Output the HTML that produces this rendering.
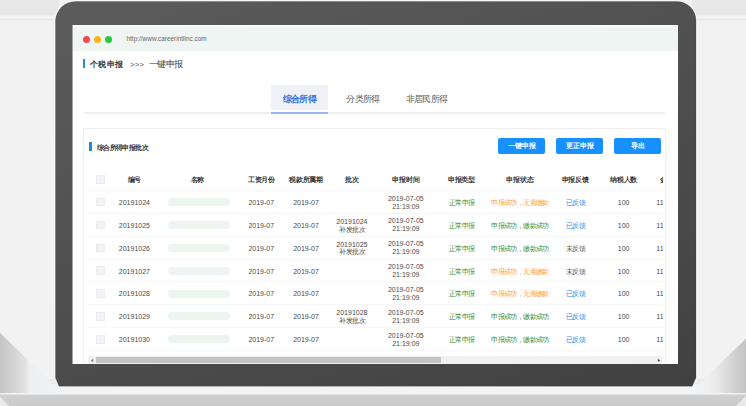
<!DOCTYPE html>
<html><head><meta charset="utf-8">
<style>
*{margin:0;padding:0;box-sizing:border-box}
html,body{width:746px;height:406px;overflow:hidden;background:#f2f2f2;font-family:"Liberation Sans",sans-serif;position:relative}
.abs{position:absolute}
#topband{position:absolute;left:0;top:0;width:746px;height:21px;background:linear-gradient(#e8e8e8 0,#e8e8e8 12px,#e3e4e4 13.5px,#ebebeb 15px,#f6f6f7 17.5px,#e6e7e7 19.5px,#f3f3f3 21px)}
#bezel{position:absolute;left:55.5px;top:1.5px;width:640.5px;height:385px;border-radius:21px 21px 6px 6px;background:linear-gradient(159deg,#5c5c5c,#414141);box-shadow:0 0 0 1px rgba(255,255,255,.75),inset 0 0 0 1px rgba(0,0,0,.12)}
#screen{position:absolute;left:73px;top:25px;width:605px;height:338.5px;background:#fff;overflow:hidden}
#bar{position:absolute;left:0;top:0;width:605px;height:25.6px;background:linear-gradient(#f8f9f9 0,#f8f9f9 2px,#eff5f3 2.6px)}
.dot{position:absolute;width:7px;height:7px;border-radius:50%;top:10.6px;box-shadow:0 0 0 0.6px rgba(255,255,255,.6)}
#url{position:absolute;left:53.5px;top:9.6px;font-size:6.45px;color:#666}
.c{position:absolute;text-align:center;white-space:nowrap;transform:translateY(-50%);line-height:1}
.h{font-size:7px;font-weight:bold;color:#383838;letter-spacing:-0.2px;text-indent:0.2px}
.d{font-size:7px;color:#4a4a4a}
.s{letter-spacing:-0.6px;font-weight:500;text-indent:0.6px}

.green{color:#2f8a2f}
.orange{color:#fd9a26}
.blue{color:#2a8af5}
.gray{color:#555}
.cb{position:absolute;width:8.6px;height:8.6px;background:#f2f2f9;border:1px solid #ececee}
.pill{position:absolute;width:62px;height:8px;border-radius:4px;background:#eef5f1}
.ln{position:absolute;left:88px;width:577px;height:1px;background:#f6f6fb}
#page{position:absolute;left:-73px;top:-25px;width:746px;height:406px}
.t8{font-size:8px;line-height:11px;transform-origin:0 50%}
.tab{font-size:9px;line-height:11px;letter-spacing:-0.65px;font-weight:500;color:#555}
.btn{top:138.3px;width:47px;height:15.4px;background:#1890ff;border-radius:2px;color:#fff;font-size:7px;font-weight:bold;text-align:center;line-height:15.3px}
</style></head><body>
<div id="topband"></div><div class="abs" style="left:58.6px;top:0;width:633px;height:21px;background:#f2f2f3"></div>
<svg class="abs" style="left:0;top:0" width="746" height="406" viewBox="0 0 746 406">
 <defs>
  <linearGradient id="gl" gradientUnits="userSpaceOnUse" x1="0" y1="0" x2="57" y2="0">
   <stop offset="0" stop-color="#c4c4c4"/><stop offset="0.1" stop-color="#cbcbcb"/><stop offset="0.3" stop-color="#d8d8d8"/><stop offset="0.45" stop-color="#e2e2e2"/><stop offset="0.52" stop-color="#eeeff1"/><stop offset="1" stop-color="#f0f1f3"/>
  </linearGradient>
  <linearGradient id="gr" gradientUnits="userSpaceOnUse" x1="746" y1="0" x2="695" y2="0">
   <stop offset="0" stop-color="#c4c4c4"/><stop offset="0.1" stop-color="#c9c9c9"/><stop offset="0.3" stop-color="#d6d6d6"/><stop offset="0.55" stop-color="#e7e7e8"/><stop offset="0.75" stop-color="#eff0f2"/><stop offset="1" stop-color="#f0f1f3"/>
  </linearGradient>
  <linearGradient id="gb" x1="0" y1="0" x2="0" y2="1">
   <stop offset="0" stop-color="#d0d0d0"/><stop offset="1" stop-color="#cacaca"/>
  </linearGradient>
 </defs>
 <rect x="0" y="380" width="746" height="14" fill="#f2f3f4"/>
 <polygon points="0,332.7 48.8,380 57,380 57,394 0,394" fill="url(#gl)"/>
 <polygon points="746,338.4 703.5,379.6 695,379.6 695,394 746,394" fill="url(#gr)"/>
 <rect x="0" y="393.5" width="746" height="12.5" fill="#e9e9e9"/>
 <path d="M0,394.3 H746 V396 L736,406 H9 L0,396.5 Z" fill="url(#gb)"/>
 <rect x="0" y="393.2" width="746" height="1.2" fill="#f5f5f5"/>
</svg>
<svg class="abs" style="left:0;top:0" width="746" height="406" viewBox="0 0 746 406">
 <defs><linearGradient id="bz" gradientUnits="userSpaceOnUse" x1="270.6" y1="-81" x2="481.4" y2="469"><stop offset="0" stop-color="#5c5c5c"/><stop offset="1" stop-color="#414141"/></linearGradient></defs>
 <path d="M75.5,1.5 H677 A19,19 0 0 1 696,20.5 V377.7 L692.2,386.2 H59 L55.5,378 V21.5 A20,20 0 0 1 75.5,1.5 Z" fill="none" stroke="#ffffff" stroke-opacity="0.8" stroke-width="2.2"/>
 <path d="M75.5,1.5 H677 A19,19 0 0 1 696,20.5 V377.7 L692.2,386.2 H59 L55.5,378 V21.5 A20,20 0 0 1 75.5,1.5 Z" fill="url(#bz)" stroke="#3a3a3a" stroke-opacity="0.35" stroke-width="0.8"/>
 <rect x="47" y="379.6" width="8" height="0.9" fill="#e0e0e0"/><rect x="51" y="382.6" width="5" height="0.9" fill="#e3e3e3"/>
 <rect x="697" y="379.6" width="7" height="0.9" fill="#e0e0e0"/><rect x="695.5" y="382.6" width="5" height="0.9" fill="#e3e3e3"/>
</svg><div class="abs" style="left:72px;top:25px;width:1px;height:338.5px;background:#a4a4a4"></div><div class="abs" style="left:677px;top:25px;width:1px;height:338.5px;background:#e9e9e9"></div>
<div id="screen">
 <div id="bar">
  <div class="dot" style="left:9.6px;background:#f5484a"></div>
  <div class="dot" style="left:20.7px;background:#f8b21c"></div>
  <div class="dot" style="left:32.2px;background:#2ac840"></div>
  <div id="url">http://www.careerintlinc.com</div>
 </div>
 <div id="page">
  <div class="abs" style="left:82.8px;top:58.8px;width:2.7px;height:9px;background:#1c8fd8"></div>
  <div class="abs t8" style="left:90.3px;top:58.8px;font-weight:bold;color:#333;letter-spacing:0.2px">个税申报</div>
  <div class="abs" style="left:130px;top:58.8px;font-size:8px;color:#555;line-height:11px">&gt;&gt;&gt;</div>
  <div class="abs t8" style="left:148.6px;top:58.6px;color:#3a3a3a;font-size:9px;letter-spacing:-0.45px;font-weight:400">一键申报</div>
  <div class="abs" style="left:271.2px;top:85.4px;width:57.3px;height:24.8px;background:#f0f1f6"></div>
  <div class="abs tab" style="left:282.6px;top:94px;font-weight:bold;color:#2f6ddf">综合所得</div>
  <div class="abs tab" style="left:346.3px;top:94px">分类所得</div>
  <div class="abs tab" style="left:405.6px;top:94px">非居民所得</div>
  <div class="abs" style="left:83.5px;top:112px;width:581px;height:2px;background:#f0f0f2"></div><div class="abs" style="left:271.2px;top:112px;width:57.3px;height:2px;background:#96b6f4"></div>
  <div class="abs" style="left:83.2px;top:127.6px;width:582.5px;height:240px;border:1px solid #efefef;border-bottom:none"></div>
  <div class="abs" style="left:89.3px;top:142.2px;width:2.7px;height:9px;background:#1c8fd8"></div>
  <div class="abs" style="left:96.9px;top:143.5px;font-size:7px;font-weight:bold;color:#333;line-height:8px;letter-spacing:-0.6px">综合所得申报批次</div>
  <div class="abs btn" style="left:498.3px">一键申报</div>
  <div class="abs btn" style="left:556.1px">更正申报</div>
  <div class="abs btn" style="left:614.2px">导出</div>
  <div class="abs" style="left:88px;top:165px;width:575.3px;height:192px;overflow:hidden"><div class="abs" style="left:-88px;top:-165px;width:746px;height:406px">
  <div class="cb" style="left:96.1px;top:175.10px"></div>
<div class="c h" style="left:94.40px;top:179.00px;width:80px">编号</div>
<div class="c h" style="left:157.40px;top:179.00px;width:80px">名称</div>
<div class="c h" style="left:221.30px;top:179.00px;width:80px">工资月份</div>
<div class="c h" style="left:266.00px;top:179.00px;width:80px">税款所属期</div>
<div class="c h" style="left:311.90px;top:179.00px;width:80px">批次</div>
<div class="c h" style="left:365.80px;top:179.00px;width:80px">申报时间</div>
<div class="c h" style="left:421.30px;top:179.00px;width:80px">申报类型</div>
<div class="c h" style="left:479.70px;top:179.00px;width:80px">申报状态</div>
<div class="c h" style="left:535.10px;top:179.00px;width:80px">申报反馈</div>
<div class="c h" style="left:583.60px;top:179.00px;width:80px">纳税人数</div>
<div class="c h" style="left:659.6px;top:179.00px;text-align:left;transform:translateY(-50%)">金额</div>
<div class="ln" style="top:190.00px"></div>
<div class="cb" style="left:96.1px;top:197.83px"></div>
<div class="c d" style="left:94.40px;top:201.93px;width:80px">20191024</div>
<div class="pill" style="left:168px;top:198.13px"></div>
<div class="c d" style="left:221.30px;top:201.93px;width:80px">2019-07</div>
<div class="c d" style="left:266.00px;top:201.93px;width:80px">2019-07</div>
<div class="c d" style="left:365.80px;top:197.53px;width:80px">2019-07-05</div>
<div class="c d" style="left:365.80px;top:205.53px;width:80px">21:19:09</div>
<div class="c d s green" style="left:421.30px;top:201.93px;width:80px">正常申报</div>
<div class="c d s orange" style="left:474.70px;top:201.93px;width:90px">申报成功，无需缴款</div>
<div class="c d s blue" style="left:535.10px;top:201.93px;width:80px">已反馈</div>
<div class="c d" style="left:583.60px;top:201.93px;width:80px">100</div>
<div class="c d" style="left:656.3px;top:201.93px;text-align:left;transform:translateY(-50%)">1100</div>
<div class="ln" style="top:212.86px"></div>
<div class="cb" style="left:96.1px;top:220.69px"></div>
<div class="c d" style="left:94.40px;top:224.79px;width:80px">20191025</div>
<div class="pill" style="left:168px;top:220.99px"></div>
<div class="c d" style="left:221.30px;top:224.79px;width:80px">2019-07</div>
<div class="c d" style="left:266.00px;top:224.79px;width:80px">2019-07</div>
<div class="c d" style="left:311.90px;top:220.89px;width:80px">20191024</div>
<div class="c d s" style="left:311.90px;top:228.59px;width:80px">补发批次</div>
<div class="c d" style="left:365.80px;top:220.39px;width:80px">2019-07-05</div>
<div class="c d" style="left:365.80px;top:228.39px;width:80px">21:19:09</div>
<div class="c d s green" style="left:421.30px;top:224.79px;width:80px">正常申报</div>
<div class="c d s green" style="left:474.70px;top:224.79px;width:90px">申报成功，缴款成功</div>
<div class="c d s blue" style="left:535.10px;top:224.79px;width:80px">已反馈</div>
<div class="c d" style="left:583.60px;top:224.79px;width:80px">100</div>
<div class="c d" style="left:656.3px;top:224.79px;text-align:left;transform:translateY(-50%)">1100</div>
<div class="ln" style="top:235.71px"></div>
<div class="cb" style="left:96.1px;top:243.54px"></div>
<div class="c d" style="left:94.40px;top:247.64px;width:80px">20191026</div>
<div class="pill" style="left:168px;top:243.84px"></div>
<div class="c d" style="left:221.30px;top:247.64px;width:80px">2019-07</div>
<div class="c d" style="left:266.00px;top:247.64px;width:80px">2019-07</div>
<div class="c d" style="left:311.90px;top:243.74px;width:80px">20191025</div>
<div class="c d s" style="left:311.90px;top:251.44px;width:80px">补发批次</div>
<div class="c d" style="left:365.80px;top:243.24px;width:80px">2019-07-05</div>
<div class="c d" style="left:365.80px;top:251.24px;width:80px">21:19:09</div>
<div class="c d s green" style="left:421.30px;top:247.64px;width:80px">正常申报</div>
<div class="c d s green" style="left:474.70px;top:247.64px;width:90px">申报成功，缴款成功</div>
<div class="c d s gray" style="left:535.10px;top:247.64px;width:80px">未反馈</div>
<div class="c d" style="left:583.60px;top:247.64px;width:80px">100</div>
<div class="c d" style="left:656.3px;top:247.64px;text-align:left;transform:translateY(-50%)">1100</div>
<div class="ln" style="top:258.57px"></div>
<div class="cb" style="left:96.1px;top:266.40px"></div>
<div class="c d" style="left:94.40px;top:270.50px;width:80px">20191027</div>
<div class="pill" style="left:168px;top:266.70px"></div>
<div class="c d" style="left:221.30px;top:270.50px;width:80px">2019-07</div>
<div class="c d" style="left:266.00px;top:270.50px;width:80px">2019-07</div>
<div class="c d" style="left:365.80px;top:266.10px;width:80px">2019-07-05</div>
<div class="c d" style="left:365.80px;top:274.10px;width:80px">21:19:09</div>
<div class="c d s green" style="left:421.30px;top:270.50px;width:80px">正常申报</div>
<div class="c d s orange" style="left:474.70px;top:270.50px;width:90px">申报成功，无需缴款</div>
<div class="c d s gray" style="left:535.10px;top:270.50px;width:80px">未反馈</div>
<div class="c d" style="left:583.60px;top:270.50px;width:80px">100</div>
<div class="c d" style="left:656.3px;top:270.50px;text-align:left;transform:translateY(-50%)">1100</div>
<div class="ln" style="top:281.43px"></div>
<div class="cb" style="left:96.1px;top:289.26px"></div>
<div class="c d" style="left:94.40px;top:293.36px;width:80px">20191028</div>
<div class="pill" style="left:168px;top:289.56px"></div>
<div class="c d" style="left:221.30px;top:293.36px;width:80px">2019-07</div>
<div class="c d" style="left:266.00px;top:293.36px;width:80px">2019-07</div>
<div class="c d" style="left:365.80px;top:288.96px;width:80px">2019-07-05</div>
<div class="c d" style="left:365.80px;top:296.96px;width:80px">21:19:09</div>
<div class="c d s green" style="left:421.30px;top:293.36px;width:80px">正常申报</div>
<div class="c d s orange" style="left:474.70px;top:293.36px;width:90px">申报成功，无需缴款</div>
<div class="c d s blue" style="left:535.10px;top:293.36px;width:80px">已反馈</div>
<div class="c d" style="left:583.60px;top:293.36px;width:80px">100</div>
<div class="c d" style="left:656.3px;top:293.36px;text-align:left;transform:translateY(-50%)">1100</div>
<div class="ln" style="top:304.28px"></div>
<div class="cb" style="left:96.1px;top:312.11px"></div>
<div class="c d" style="left:94.40px;top:316.21px;width:80px">20191029</div>
<div class="pill" style="left:168px;top:312.41px"></div>
<div class="c d" style="left:221.30px;top:316.21px;width:80px">2019-07</div>
<div class="c d" style="left:266.00px;top:316.21px;width:80px">2019-07</div>
<div class="c d" style="left:311.90px;top:312.31px;width:80px">20191028</div>
<div class="c d s" style="left:311.90px;top:320.01px;width:80px">补发批次</div>
<div class="c d" style="left:365.80px;top:311.81px;width:80px">2019-07-05</div>
<div class="c d" style="left:365.80px;top:319.81px;width:80px">21:19:09</div>
<div class="c d s green" style="left:421.30px;top:316.21px;width:80px">正常申报</div>
<div class="c d s green" style="left:474.70px;top:316.21px;width:90px">申报成功，缴款成功</div>
<div class="c d s blue" style="left:535.10px;top:316.21px;width:80px">已反馈</div>
<div class="c d" style="left:583.60px;top:316.21px;width:80px">100</div>
<div class="c d" style="left:656.3px;top:316.21px;text-align:left;transform:translateY(-50%)">1100</div>
<div class="ln" style="top:327.14px"></div>
<div class="cb" style="left:96.1px;top:334.97px"></div>
<div class="c d" style="left:94.40px;top:339.07px;width:80px">20191030</div>
<div class="pill" style="left:168px;top:335.27px"></div>
<div class="c d" style="left:221.30px;top:339.07px;width:80px">2019-07</div>
<div class="c d" style="left:266.00px;top:339.07px;width:80px">2019-07</div>
<div class="c d" style="left:365.80px;top:334.67px;width:80px">2019-07-05</div>
<div class="c d" style="left:365.80px;top:342.67px;width:80px">21:19:09</div>
<div class="c d s green" style="left:421.30px;top:339.07px;width:80px">正常申报</div>
<div class="c d s green" style="left:474.70px;top:339.07px;width:90px">申报成功，缴款成功</div>
<div class="c d s blue" style="left:535.10px;top:339.07px;width:80px">已反馈</div>
<div class="c d" style="left:583.60px;top:339.07px;width:80px">100</div>
<div class="c d" style="left:656.3px;top:339.07px;text-align:left;transform:translateY(-50%)">1100</div>
<div class="ln" style="top:350.00px"></div>
  </div></div>
  <div class="abs" style="left:88px;top:355.8px;width:575px;height:8px;background:#f0f0f0"></div>
  <div class="abs" style="left:96.4px;top:357px;width:344.6px;height:6px;background:#c3c3c3"></div>
  <svg class="abs" style="left:88px;top:356.5px" width="575" height="7"><path d="M5.2,1.8 L2.6,3.4 L5.2,5 Z" fill="#7a7a7a"/><path d="M569.8,1.8 L572.4,3.4 L569.8,5 Z" fill="#555"/></svg>
 </div>
</div>
</body></html>
